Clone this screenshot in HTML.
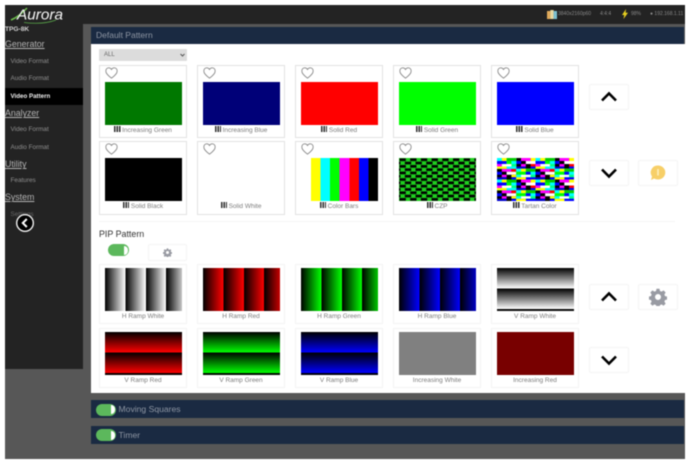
<!DOCTYPE html>
<html><head><meta charset="utf-8"><style>
html,body{margin:0;padding:0;background:#fff;width:687px;height:466px;overflow:hidden;font-family:"Liberation Sans",sans-serif}
#r{position:absolute;left:0;top:0;width:687px;height:466px;filter:blur(.5px);overflow:hidden}
#r div,#r svg{position:absolute}
.s{color:#8f8f8f;font-size:6.400px;left:10.500px;line-height:10px;white-space:nowrap}
.h{color:#b4b4b4;font-size:8.800px;left:5px;line-height:12px;margin-top:-.7px;text-decoration:underline;white-space:nowrap}
.c{width:86px;border:1px solid #e2e2e2;background:#fff;box-sizing:content-box}
.c.p{border-color:#f3f3f3}
.i{left:4.500px;width:77px;height:43px}
.l{left:0;width:86px;text-align:center;color:#7c7c7c;font-size:6.500px;line-height:9px;white-space:nowrap}
.l b{display:inline-block;width:6.500px;height:5.500px;margin-right:1.500px;background:repeating-linear-gradient(90deg,#333 0 1.500px,#eee 1.500px 2.400px)}
.b{width:38px;height:24px;background:#fff;border:1px solid #f4f4f4;border-radius:2px}
.t{background:#5cb85c;border-radius:7px}
.t i{position:absolute;right:1px;top:1.500px;bottom:1.500px;width:4px;background:#fff;border-radius:0 6px 6px 0}
.bar{left:91px;width:593px;height:18px;background:#1a2a42;color:#8d95a2;font-size:8.600px;line-height:18px}
</style></head><body><div id="r">
<svg width="0" height="0"><defs>
<symbol id="hrt" viewBox="0 0 24 22"><path d="M12 20.500C5 15 1.500 11.500 1.500 7.200 1.500 3.800 4 1.500 7 1.500c2 0 3.900 1.100 5 3 1.100-1.900 3-3 5-3 3 0 5.500 2.300 5.500 5.700 0 4.300-3.500 7.800-10.500 13.300z" fill="#fff" stroke="#8a8a8a" stroke-width="1.600"/></symbol>
<symbol id="gear" viewBox="0 0 24 24"><path d="M10 1h4l.6 3 2.200.9 2.600-1.700 2.800 2.800-1.700 2.600.9 2.200 3 .6v4l-3 .6-.9 2.200 1.700 2.600-2.800 2.800-2.600-1.700-2.200.9-.6 3h-4l-.6-3-2.200-.9-2.600 1.700-2.800-2.800 1.700-2.600-.9-2.200-3-.6v-4l3-.6.9-2.200-1.700-2.600 2.800-2.800 2.600 1.700 2.200-.9zM12 8a4 4 0 100 8 4 4 0 000-8z" fill="#999ba3" fill-rule="evenodd"/></symbol>
<pattern id="dk" width="38.500" height="21.500" patternUnits="userSpaceOnUse">
<rect width="38.500" height="21.500" fill="#fff"/>
<rect x="19.250" y="0" width="19.250" height="10.750" fill="#000"/>
<rect x="24" y="0" width="9.600" height="3" fill="#f0f"/><rect x="33.600" y="0" width="4.900" height="3" fill="#ff0"/>
<rect x="28.800" y="3" width="9.700" height="3" fill="#fff"/><rect x="19.250" y="3" width="4.800" height="3" fill="#00f"/>
<rect x="33.600" y="6" width="4.900" height="2.500" fill="#f00"/><rect x="24" y="6" width="4.800" height="2.500" fill="#f0f"/>
<rect x="19.250" y="8.500" width="9.600" height="2.250" fill="#00c"/><rect x="33.600" y="8.500" width="4.900" height="2.250" fill="#00f"/>
<rect x="0" y="10.750" width="19.250" height="10.750" fill="#000"/>
<rect x="4.800" y="10.750" width="9.600" height="3" fill="#f0f"/><rect x="14.400" y="10.750" width="4.850" height="3" fill="#f00"/>
<rect x="9.600" y="13.750" width="9.650" height="3" fill="#fff"/><rect x="0" y="13.750" width="4.800" height="3" fill="#00f"/>
<rect x="14.400" y="16.750" width="4.850" height="2.500" fill="#ff0"/><rect x="4.800" y="16.750" width="4.800" height="2.500" fill="#f0f"/>
<rect x="0" y="19.250" width="9.600" height="2.250" fill="#00c"/><rect x="14.400" y="19.250" width="4.850" height="2.250" fill="#00f"/>
<rect x="0" y="0" width="19.250" height="10.750" fill="#0f8"/>
<rect x="0" y="0" width="4.800" height="3" fill="#0ff"/><rect x="9.600" y="0" width="9.650" height="3" fill="#0c0"/><rect x="4.800" y="0" width="4.800" height="3" fill="#ff0"/>
<rect x="0" y="3" width="9.600" height="3" fill="#00f"/><rect x="9.600" y="3" width="4.800" height="3" fill="#0f0"/><rect x="14.400" y="3" width="4.850" height="3" fill="#0ff"/>
<rect x="4.800" y="6" width="9.600" height="2.500" fill="#fff"/><rect x="0" y="6" width="4.800" height="2.500" fill="#f0f"/>
<rect x="9.600" y="8.500" width="9.650" height="2.250" fill="#0ff"/><rect x="0" y="8.500" width="9.600" height="2.250" fill="#ff0"/>
<rect x="19.250" y="10.750" width="19.250" height="10.750" fill="#0f8"/>
<rect x="19.250" y="10.750" width="4.800" height="3" fill="#0ff"/><rect x="28.800" y="10.750" width="9.700" height="3" fill="#0c0"/><rect x="24" y="10.750" width="4.800" height="3" fill="#ff0"/>
<rect x="19.250" y="13.750" width="9.600" height="3" fill="#0f0"/><rect x="28.800" y="13.750" width="4.800" height="3" fill="#00f"/><rect x="33.600" y="13.750" width="4.900" height="3" fill="#0ff"/>
<rect x="24" y="16.750" width="9.600" height="2.500" fill="#fff"/><rect x="19.250" y="16.750" width="4.800" height="2.500" fill="#0ff"/>
<rect x="28.800" y="19.250" width="9.700" height="2.250" fill="#00f"/><rect x="19.250" y="19.250" width="9.600" height="2.250" fill="#ff0"/>
</pattern>
<pattern id="cz" width="10.700" height="6.600" patternUnits="userSpaceOnUse">
<rect width="10.700" height="6.600" fill="#1fd01f"/><rect x=".5" y=".4" width="6.300" height="2.700" fill="#000"/><rect x="5.850" y="3.700" width="6.300" height="2.700" fill="#000"/><rect x="-4.850" y="3.700" width="6.300" height="2.700" fill="#000"/>
</pattern>
</defs></svg>

<div style="left:5px;top:5px;width:680px;height:454px;background:#575757"></div>
<div style="left:5px;top:5px;width:680px;height:19px;background:#232323"></div>
<div style="left:5px;top:24px;width:78px;height:345px;background:#232323"></div>

<svg style="left:10px;top:6px" width="56" height="18" viewBox="0 0 56 18"><path d="M1 14C8 11 12 7 17 2" fill="none" stroke="#6fc04f" stroke-width="1.500"/><path d="M14 16.500C26 18 38 17 46 14" fill="none" stroke="#5aa84a" stroke-width=".8"/><text x="7" y="13.500" font-family="Liberation Sans,sans-serif" font-style="italic" font-size="15" fill="#f6f6f6" textLength="46" lengthAdjust="spacingAndGlyphs">Aurora</text></svg>

<div style="left:5px;top:25px;color:#d0d0d0;font-size:6.600px;font-weight:bold;line-height:9px">TPG-8K</div>
<div class="h" style="top:39px">Generator</div>
<div class="s" style="top:57px">Video Format</div>
<div class="s" style="top:74px">Audio Format</div>
<div style="left:5px;top:88px;width:78px;height:17px;background:#000"></div>
<div class="s" style="top:92px;color:#eee;font-weight:bold;font-size:6.200px">Video Pattern</div>
<div class="h" style="top:108px">Analyzer</div>
<div class="s" style="top:125px">Video Format</div>
<div class="s" style="top:143px">Audio Format</div>
<div class="h" style="top:159px">Utility</div>
<div class="s" style="top:176px">Features</div>
<div class="h" style="top:192px">System</div>
<div class="s" style="top:210px;color:#666">Settings</div>
<svg style="left:15px;top:213px" width="20" height="20" viewBox="0 0 20 20"><circle cx="10" cy="10" r="8.300" fill="#000" stroke="#f0f0f0" stroke-width="1.400"/><path d="M11.800 6L7.800 10l4 4" fill="none" stroke="#fff" stroke-width="2"/></svg>

<svg style="left:547px;top:10px" width="10" height="9" viewBox="0 0 10 9"><rect width="3.400" height="9" y="1" fill="#e0a95a"/><rect x="3.300" y="0" width="3.400" height="9" fill="#e8d8a0"/><rect x="6.600" y="1" width="3.400" height="8" fill="#7cc0d0"/></svg>
<div style="left:558px;top:10px;color:#8a8a8a;font-size:5px;line-height:8px;white-space:nowrap">3840x2160p60</div>
<div style="left:600px;top:10px;color:#8a8a8a;font-size:5px;line-height:8px;white-space:nowrap">4:4:4</div>
<svg style="left:622px;top:9px" width="6" height="10" viewBox="0 0 6 10"><path d="M4 0L0 6h2.200L1.500 10 6 3.800H3.600z" fill="#e8d020"/></svg>
<div style="left:631px;top:10px;color:#8a8a8a;font-size:5px;line-height:8px;white-space:nowrap">98%</div>
<div style="left:650px;top:10px;width:34px;overflow:hidden;color:#8a8a8a;font-size:5px;line-height:8px;white-space:nowrap">● 192.168.1.11</div>

<div style="left:91px;top:27px;width:593px;height:17px;background:#1a2a42;color:#8d95a2;font-size:8.500px;line-height:17px;text-indent:5px">Default Pattern</div>
<div style="left:91px;top:44px;width:596px;height:349px;background:#fff"></div>
<div style="left:99px;top:49px;width:88px;height:12px;background:#dcdcdc;border-radius:1px;color:#666;font-size:6px;line-height:12px;text-indent:5px">ALL<svg style="left:81px;top:4px" width="5" height="4" viewBox="0 0 5 4"><path d="M.5 1l2 2 2-2" fill="none" stroke="#555"/></svg></div>

<!-- row 1 -->
<div class="c" style="left:99px;top:65px;height:71px"><svg style="left:4.500px;top:1px" width="13" height="12"><use href="#hrt"/></svg><div class="i" style="top:16px;background:#007800"></div><div class="l" style="top:59.500px"><b></b>Increasing Green</div></div>
<div class="c" style="left:197px;top:65px;height:71px"><svg style="left:4.500px;top:1px" width="13" height="12"><use href="#hrt"/></svg><div class="i" style="top:16px;background:#000078"></div><div class="l" style="top:59.500px"><b></b>Increasing Blue</div></div>
<div class="c" style="left:295px;top:65px;height:71px"><svg style="left:4.500px;top:1px" width="13" height="12"><use href="#hrt"/></svg><div class="i" style="top:16px;background:#f00"></div><div class="l" style="top:59.500px"><b></b>Solid Red</div></div>
<div class="c" style="left:393px;top:65px;height:71px"><svg style="left:4.500px;top:1px" width="13" height="12"><use href="#hrt"/></svg><div class="i" style="top:16px;background:#0f0"></div><div class="l" style="top:59.500px"><b></b>Solid Green</div></div>
<div class="c" style="left:491px;top:65px;height:71px"><svg style="left:4.500px;top:1px" width="13" height="12"><use href="#hrt"/></svg><div class="i" style="top:16px;background:#00f"></div><div class="l" style="top:59.500px"><b></b>Solid Blue</div></div>

<!-- row 2 -->
<div class="c" style="left:99px;top:141px;height:72px"><svg style="left:4.500px;top:1px" width="13" height="12"><use href="#hrt"/></svg><div class="i" style="top:16px;background:#000"></div><div class="l" style="top:59.500px"><b></b>Solid Black</div></div>
<div class="c" style="left:197px;top:141px;height:72px"><svg style="left:4.500px;top:1px" width="13" height="12"><use href="#hrt"/></svg><div class="i" style="top:16px;background:#fff"></div><div class="l" style="top:59.500px"><b></b>Solid White</div></div>
<div class="c" style="left:295px;top:141px;height:72px"><svg style="left:4.500px;top:1px" width="13" height="12"><use href="#hrt"/></svg><div class="i" style="top:16px;background:linear-gradient(90deg,#fff 0 13%,#ff0 13% 25.400%,#0ff 25.400% 37.900%,#0f0 37.900% 50.300%,#f0f 50.300% 62.700%,#f00 62.700% 75.100%,#00f 75.100% 87.600%,#000 87.600%)"></div><div class="l" style="top:59.500px"><b></b>Color Bars</div></div>
<div class="c" style="left:393px;top:141px;height:72px"><svg style="left:4.500px;top:1px" width="13" height="12"><use href="#hrt"/></svg><svg class="i" style="top:16px" width="77" height="43"><rect width="77" height="43" fill="url(#cz)"/></svg><div class="l" style="top:59.500px"><b></b>CZP</div></div>
<div class="c" style="left:491px;top:141px;height:72px"><svg style="left:4.500px;top:1px" width="13" height="12"><use href="#hrt"/></svg><svg class="i" style="top:16px" width="77" height="43"><rect width="77" height="43" fill="url(#dk)"/></svg><div class="l" style="top:59.500px"><b></b>Tartan Color</div></div>

<div class="b" style="left:589px;top:84px"><svg style="left:10px;top:6px" width="18" height="11" viewBox="0 0 18 11"><path d="M2 9.500L9 2.500l7 7" fill="none" stroke="#000" stroke-width="2.600"/></svg></div>
<div class="b" style="left:589px;top:160px"><svg style="left:10px;top:7px" width="18" height="11" viewBox="0 0 18 11"><path d="M2 1.500L9 8.500l7-7" fill="none" stroke="#000" stroke-width="2.600"/></svg></div>
<div class="b" style="left:638px;top:160px"><svg style="left:11px;top:4px" width="16" height="16" viewBox="0 0 16 16"><path d="M8 .5a7.300 7 0 110 14c-1.500 0-2.800-.4-3.800-1L1 15l1-3.500A7 7 0 018 .5z" fill="#f7cf68"/><rect x="7.200" y="4" width="1.600" height="6.500" fill="#fdeebc"/></svg></div>

<div style="left:99px;top:221px;width:576px;height:1px;background:#f5f5f5"></div>
<div style="left:99px;top:228px;color:#333;font-size:8.900px;line-height:12px">PIP Pattern</div>
<div class="t" style="left:108px;top:244px;width:21px;height:12px"><i></i></div>
<div class="b" style="left:148px;top:244px;width:37px;height:15px"><svg style="left:14px;top:3px" width="9" height="9"><use href="#gear"/></svg></div>

<!-- pip 1 -->
<div class="c p" style="left:99px;top:264px;height:58px"><div class="i" style="top:3px;background:repeating-linear-gradient(90deg,#000 0,#fff 20.400px)"></div><div class="l" style="top:46.500px">H Ramp White</div></div>
<div class="c p" style="left:197px;top:264px;height:58px"><div class="i" style="top:3px;background:repeating-linear-gradient(90deg,#000 0,#f00 20.400px)"></div><div class="l" style="top:46.500px">H Ramp Red</div></div>
<div class="c p" style="left:295px;top:264px;height:58px"><div class="i" style="top:3px;background:repeating-linear-gradient(90deg,#000 0,#0f0 20.400px)"></div><div class="l" style="top:46.500px">H Ramp Green</div></div>
<div class="c p" style="left:393px;top:264px;height:58px"><div class="i" style="top:3px;background:repeating-linear-gradient(90deg,#000 0,#00f 20.400px)"></div><div class="l" style="top:46.500px">H Ramp Blue</div></div>
<div class="c p" style="left:491px;top:264px;height:58px"><div class="i" style="top:3px;background:repeating-linear-gradient(180deg,#000 0,#fff 20.500px)"></div><div class="l" style="top:46.500px">V Ramp White</div></div>

<!-- pip 2 -->
<div class="c p" style="left:99px;top:328px;height:58px"><div class="i" style="top:3px;background:repeating-linear-gradient(180deg,#000 0,#f00 20.500px)"></div><div class="l" style="top:46.500px">V Ramp Red</div></div>
<div class="c p" style="left:197px;top:328px;height:58px"><div class="i" style="top:3px;background:repeating-linear-gradient(180deg,#000 0,#0f0 20.500px)"></div><div class="l" style="top:46.500px">V Ramp Green</div></div>
<div class="c p" style="left:295px;top:328px;height:58px"><div class="i" style="top:3px;background:repeating-linear-gradient(180deg,#000 0,#00f 20.500px)"></div><div class="l" style="top:46.500px">V Ramp Blue</div></div>
<div class="c p" style="left:393px;top:328px;height:58px"><div class="i" style="top:3px;background:#808080"></div><div class="l" style="top:46.500px">Increasing White</div></div>
<div class="c p" style="left:491px;top:328px;height:58px"><div class="i" style="top:3px;background:#780000"></div><div class="l" style="top:46.500px">Increasing Red</div></div>

<div class="b" style="left:589px;top:284px"><svg style="left:10px;top:6px" width="18" height="11" viewBox="0 0 18 11"><path d="M2 9.500L9 2.500l7 7" fill="none" stroke="#000" stroke-width="2.600"/></svg></div>
<div class="b" style="left:638px;top:284px"><svg style="left:10px;top:3px" width="18" height="18"><use href="#gear"/></svg></div>
<div class="b" style="left:589px;top:347px"><svg style="left:10px;top:7px" width="18" height="11" viewBox="0 0 18 11"><path d="M2 1.500L9 8.500l7-7" fill="none" stroke="#000" stroke-width="2.600"/></svg></div>

<div class="bar" style="top:400px"><span style="position:absolute;left:27.500px">Moving Squares</span></div>
<div class="t" style="left:96px;top:403.500px;width:20px;height:12px"><i></i></div>
<div class="bar" style="top:426px"><span style="position:absolute;left:27.500px">Timer</span></div>
<div class="t" style="left:96px;top:429px;width:20px;height:12px"><i></i></div>
</div></body></html>
